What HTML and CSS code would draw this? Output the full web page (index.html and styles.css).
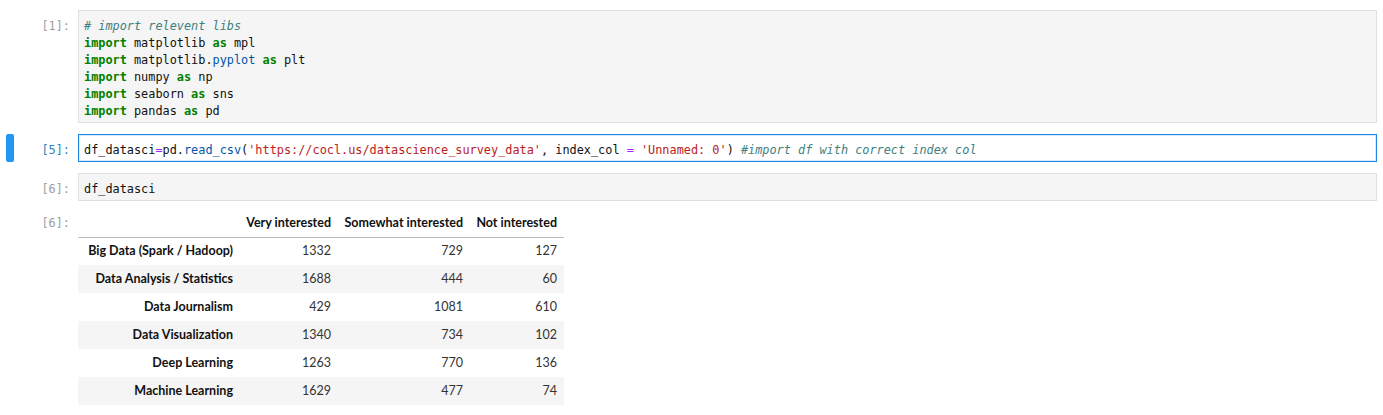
FILE: index.html
```html
<!DOCTYPE html>
<html>
<head>
<meta charset="utf-8">
<link rel="stylesheet" href="styles.css">
</head>
<body>
<div class="notebook">
  <div class="cell">
    <div class="collapser"></div>
    <div class="prompt">[1]:</div>
    <div class="editor"><pre class="code"><span class="cm"># import relevent libs</span>
<span class="kw">import</span> matplotlib <span class="kw">as</span> mpl
<span class="kw">import</span> matplotlib.<span class="pr">pyplot</span> <span class="kw">as</span> plt
<span class="kw">import</span> numpy <span class="kw">as</span> np
<span class="kw">import</span> seaborn <span class="kw">as</span> sns
<span class="kw">import</span> pandas <span class="kw">as</span> pd</pre></div>
  </div>

  <div class="cell">
    <div class="collapser"><div class="bar"></div></div>
    <div class="prompt active">[5]:</div>
    <div class="editor focused"><pre class="code">df_datasci<span class="op">=</span>pd.<span class="pr">read_csv</span>(<span class="st">'https://cocl.us/datascience_survey_data'</span>, index_col <span class="op">=</span> <span class="st">'Unnamed: 0'</span>) <span class="cm">#import df with correct index col</span></pre></div>
  </div>

  <div class="cell">
    <div class="collapser"></div>
    <div class="prompt">[6]:</div>
    <div class="editor"><pre class="code">df_datasci</pre></div>
  </div>

  <div class="output">
    <div class="collapser"></div>
    <div class="prompt out">[6]:</div>
    <div class="output-area">
      <table class="df">
        <colgroup>
          <col class="c-idx"><col class="c-a"><col class="c-b"><col class="c-c">
        </colgroup>
        <thead>
          <tr><th></th><th>Very interested</th><th>Somewhat interested</th><th>Not interested</th></tr>
        </thead>
        <tbody>
          <tr><th>Big Data (Spark / Hadoop)</th><td>1332</td><td>729</td><td>127</td></tr>
          <tr><th>Data Analysis / Statistics</th><td>1688</td><td>444</td><td>60</td></tr>
          <tr><th>Data Journalism</th><td>429</td><td>1081</td><td>610</td></tr>
          <tr><th>Data Visualization</th><td>1340</td><td>734</td><td>102</td></tr>
          <tr><th>Deep Learning</th><td>1263</td><td>770</td><td>136</td></tr>
          <tr><th>Machine Learning</th><td>1629</td><td>477</td><td>74</td></tr>
        </tbody>
      </table>
    </div>
  </div>
</div>
</body>
</html>
```

FILE: styles.css
```css
html, body {
  margin: 0;
  padding: 0;
  background: #ffffff;
}

.notebook {
  padding: 10px 6px 0 0;
  display: flex;
  flex-direction: column;
  gap: 11px;
}

.cell, .output {
  display: flex;
  align-items: flex-start;
}

.output {
  margin-top: -3px;
}

.collapser {
  width: 14px;
  flex: none;
  align-self: stretch;
  display: flex;
  justify-content: flex-end;
}

.bar {
  width: 8px;
  height: 100%;
  background: #2196f3;
  border-radius: 2px;
}

.prompt {
  width: 64px;
  flex: none;
  box-sizing: border-box;
  padding: 8px 8px 0 0;
  text-align: right;
  font-family: "DejaVu Sans Mono", monospace;
  font-size: 11.86px;
  line-height: 17px;
  color: #9e9e9e;
}

.prompt.active {
  color: #307fc1;
}

.prompt.out {
  padding-top: 6px;
}

.editor {
  flex: 1;
  min-width: 0;
  background: #f5f5f5;
  border: 1px solid #e0e0e0;
  padding: 7px 5px 2px 5px;
}

.editor.focused {
  background: #ffffff;
  border-color: #1e88e5;
  box-shadow: inset 0 0 0 1px #d6ebfb;
}

.code {
  margin: 0;
  font-family: "DejaVu Sans Mono", monospace;
  font-size: 11.86px;
  line-height: 17px;
  color: #111111;
  white-space: pre;
}

.kw { color: #008000; font-weight: bold; }
.pr { color: #0055aa; }
.op { color: #aa22ff; }
.st { color: #ba2121; }
.cm { color: #408080; font-style: italic; }

.output-area {
  flex: 1;
}

.df {
  border-collapse: collapse;
  table-layout: fixed;
  width: 486px;
  font-family: "Lato", "Noto Sans", sans-serif;
  font-size: 12.5px;
  color: #000000;
}

.c-idx { width: 162px; }
.c-a { width: 98px; }
.c-b { width: 132px; }
.c-c { width: 94px; }

.df th, .df td {
  height: 28px;
  padding: 0 7px 0 6px;
  text-align: right;
  white-space: nowrap;
  vertical-align: middle;
  box-sizing: border-box;
  line-height: 16px;
}

.df th {
  font-weight: bold;
  color: #111111;
}

.df td {
  color: #333333;
}

.df thead tr {
  border-bottom: 1px solid #bdbdbd;
}

.df tbody tr:nth-child(even) {
  background: #f5f5f5;
}
```
